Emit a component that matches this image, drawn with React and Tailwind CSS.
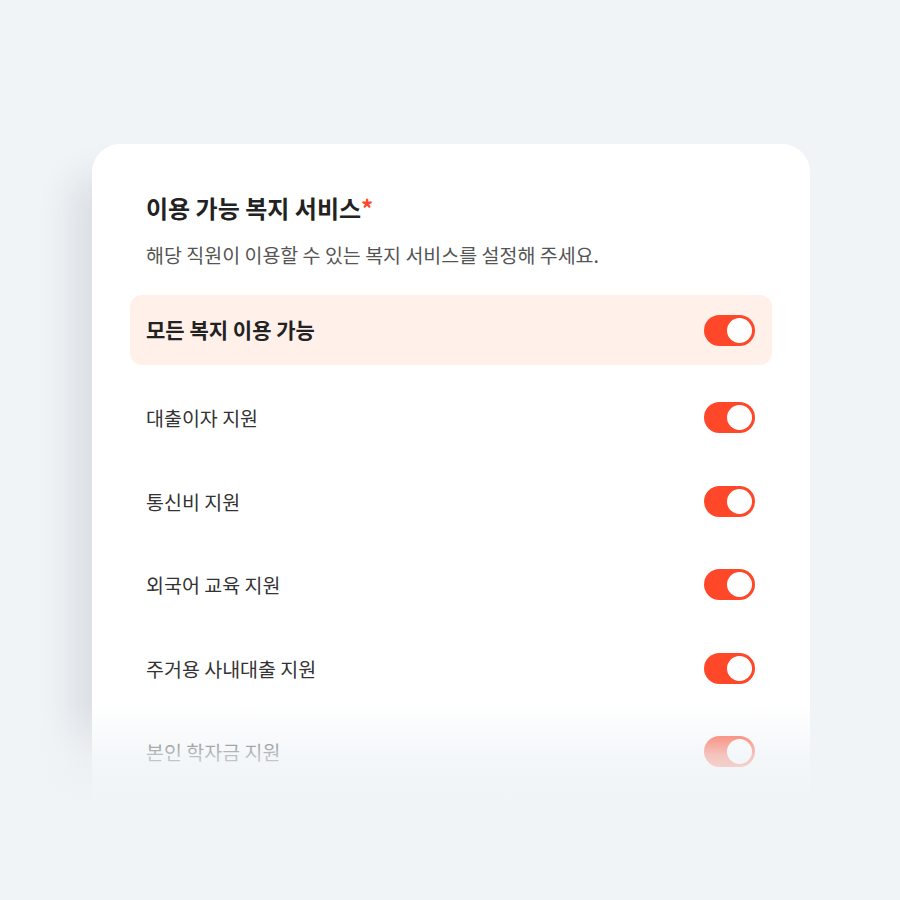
import { Fragment } from 'react'

const services = ['대출이자 지원', '통신비 지원', '외국어 교육 지원', '주거용 사내대출 지원', '본인 학자금 지원']

function Toggle() {
  return (
    <div className="flex h-[31px] w-[51px] shrink-0 items-center justify-end rounded-full bg-[#ff4729] pr-[3px]">
      <div className="h-[25px] w-[25px] rounded-full bg-white" />
    </div>
  )
}

export default function App() {
  return (
    <div
      className="relative h-[900px] w-[900px] overflow-hidden bg-[#f0f4f7] pt-[144px] pl-[92px]"
      style={{ fontFamily: '"Noto Sans CJK KR", "Noto Sans", sans-serif' }}
    >
      <div className="h-[760px] w-[718px] rounded-t-[28px] bg-white px-[38px] pt-[48px] shadow-[-28px_24px_36px_-8px_rgba(30,41,59,0.10)]">
        <h2 className="px-4 text-[24px] font-bold leading-[32px] text-[#222]">
          이용 가능 복지 서비스<span className="text-[#ff4729]">*</span>
        </h2>
        <p className="mt-[17px] px-4 text-[19.5px] leading-[28px] text-[#555]">
          해당 직원이 이용할 수 있는 복지 서비스를 설정해 주세요.
        </p>

        <div className="mt-[26px] flex h-[70px] items-center justify-between rounded-[12px] bg-[#fff0ea] pl-4 pr-[17px]">
          <span className="text-[21px] font-bold text-[#222]">모든 복지 이용 가능</span>
          <Toggle />
        </div>

        <div className="mt-[11px] flex flex-col">
          {services.map((name) => (
            <Fragment key={name}>
              <div className="flex h-[83.5px] items-center justify-between pl-4 pr-[17px]">
                <span className="text-[19.5px] text-[#333]">{name}</span>
                <Toggle />
              </div>
            </Fragment>
          ))}
        </div>
      </div>

      <div className="pointer-events-none absolute inset-x-0 top-[705px] h-[195px] bg-[linear-gradient(to_bottom,rgba(240,244,247,0)_0px,rgba(240,244,247,0.72)_50px,#f0f4f7_95px)]" />
    </div>
  )
}
